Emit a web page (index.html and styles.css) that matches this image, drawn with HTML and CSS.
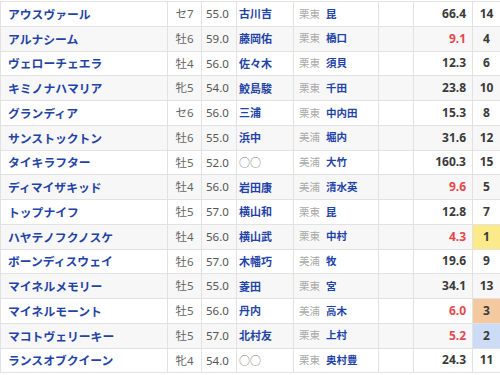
FILE: index.html
```html
<!DOCTYPE html>
<html lang="ja">
<head>
<meta charset="utf-8">
<link rel="stylesheet" href="styles.css">
</head>
<body>
<table class="shutuba">
<colgroup>
<col class="c-name"><col class="c-sex"><col class="c-wt"><col class="c-jk"><col class="c-tr"><col class="c-blank"><col class="c-odds"><col class="c-pop">
</colgroup>
<tbody>
<tr><td class="name">アウスヴァール</td><td class="sex">セ7</td><td class="wt">55.0</td><td class="jk">古川吉</td><td class="tr"><span class="area">栗東</span><span class="tn">昆</span></td><td></td><td class="odds">66.4</td><td class="pop">14</td></tr>
<tr><td class="name">アルナシーム</td><td class="sex">牡6</td><td class="wt">59.0</td><td class="jk">藤岡佑</td><td class="tr"><span class="area">栗東</span><span class="tn">橋口</span></td><td></td><td class="odds red">9.1</td><td class="pop">4</td></tr>
<tr><td class="name">ヴェローチェエラ</td><td class="sex">牡4</td><td class="wt">56.0</td><td class="jk">佐々木</td><td class="tr"><span class="area">栗東</span><span class="tn">須貝</span></td><td></td><td class="odds">12.3</td><td class="pop">6</td></tr>
<tr><td class="name">キミノナハマリア</td><td class="sex">牝5</td><td class="wt">54.0</td><td class="jk">鮫島駿</td><td class="tr"><span class="area">栗東</span><span class="tn">千田</span></td><td></td><td class="odds">23.8</td><td class="pop">10</td></tr>
<tr><td class="name">グランディア</td><td class="sex">セ6</td><td class="wt">56.0</td><td class="jk">三浦</td><td class="tr"><span class="area">栗東</span><span class="tn">中内田</span></td><td></td><td class="odds">15.3</td><td class="pop">8</td></tr>
<tr><td class="name">サンストックトン</td><td class="sex">牡6</td><td class="wt">55.0</td><td class="jk">浜中</td><td class="tr"><span class="area">美浦</span><span class="tn">堀内</span></td><td></td><td class="odds">31.6</td><td class="pop">12</td></tr>
<tr><td class="name">タイキラフター</td><td class="sex">牡5</td><td class="wt">52.0</td><td class="jk none">○○</td><td class="tr"><span class="area">美浦</span><span class="tn">大竹</span></td><td></td><td class="odds">160.3</td><td class="pop">15</td></tr>
<tr><td class="name">ディマイザキッド</td><td class="sex">牡4</td><td class="wt">56.0</td><td class="jk">岩田康</td><td class="tr"><span class="area">美浦</span><span class="tn">清水英</span></td><td></td><td class="odds red">9.6</td><td class="pop">5</td></tr>
<tr><td class="name">トップナイフ</td><td class="sex">牡5</td><td class="wt">57.0</td><td class="jk">横山和</td><td class="tr"><span class="area">栗東</span><span class="tn">昆</span></td><td></td><td class="odds">12.8</td><td class="pop">7</td></tr>
<tr><td class="name">ハヤテノフクノスケ</td><td class="sex">牡4</td><td class="wt">56.0</td><td class="jk">横山武</td><td class="tr"><span class="area">栗東</span><span class="tn">中村</span></td><td></td><td class="odds red">4.3</td><td class="pop first">1</td></tr>
<tr><td class="name">ボーンディスウェイ</td><td class="sex">牡6</td><td class="wt">57.0</td><td class="jk">木幡巧</td><td class="tr"><span class="area">美浦</span><span class="tn">牧</span></td><td></td><td class="odds">19.6</td><td class="pop">9</td></tr>
<tr><td class="name">マイネルメモリー</td><td class="sex">牡5</td><td class="wt">55.0</td><td class="jk">菱田</td><td class="tr"><span class="area">栗東</span><span class="tn">宮</span></td><td></td><td class="odds">34.1</td><td class="pop">13</td></tr>
<tr><td class="name">マイネルモーント</td><td class="sex">牡5</td><td class="wt">56.0</td><td class="jk">丹内</td><td class="tr"><span class="area">美浦</span><span class="tn">高木</span></td><td></td><td class="odds red">6.0</td><td class="pop third">3</td></tr>
<tr><td class="name">マコトヴェリーキー</td><td class="sex">牡5</td><td class="wt">57.0</td><td class="jk">北村友</td><td class="tr"><span class="area">栗東</span><span class="tn">上村</span></td><td></td><td class="odds red">5.2</td><td class="pop second">2</td></tr>
<tr><td class="name">ランスオブクイーン</td><td class="sex">牝4</td><td class="wt">54.0</td><td class="jk none">○○</td><td class="tr"><span class="area">栗東</span><span class="tn">奥村豊</span></td><td></td><td class="odds">24.3</td><td class="pop">11</td></tr>
</tbody>
</table>
</body>
</html>
```
FILE: styles.css
```css
html, body {
  margin: 0;
  padding: 0;
  overflow: hidden;
  background: #fff;
}
body {
  font-family: "Noto Sans", "Noto Sans CJK JP", sans-serif;
  color: #555;
}
.shutuba {
  margin-top: 1px;
  border-collapse: collapse;
  table-layout: fixed;
  width: 504px;
}
.c-name { width: 167px; }
.c-sex { width: 34px; }
.c-wt { width: 35px; }
.c-jk { width: 57px; }
.c-tr { width: 85px; }
.c-blank { width: 35px; }
.c-odds { width: 59px; }
.c-pop { width: 32px; }
.shutuba tr {
  height: 24.75px;
}
.shutuba tr:nth-child(even) {
  background: #f7f7f7;
}
.shutuba td {
  border: 1px solid #e2e2e2;
  padding: 0;
  white-space: nowrap;
  overflow: hidden;
  vertical-align: middle;
  line-height: 1;
  height: 23.75px;
  box-sizing: border-box;
}
.name {
  padding-left: 7px !important;
  font-family: "Noto Sans CJK JP", sans-serif;
  font-weight: bold;
  font-size: 11.8px;
  color: #1f43a6;
}
.sex {
  text-align: center;
  font-size: 11.5px;
  color: #666;
}
.wt {
  padding-left: 4px !important;
  font-size: 11.5px;
  color: #555;
}
.jk {
  padding-left: 2px !important;
  font-family: "Noto Sans CJK JP", sans-serif;
  font-weight: bold;
  font-size: 11px;
  color: #1f43a6;
}
.jk.none {
  font-weight: normal;
  color: #777;
}
.tr {
  padding-left: 5px !important;
  font-family: "Noto Sans CJK JP", sans-serif;
  font-size: 10.5px;
}
.area {
  color: #aaa;
  margin-right: 6px;
}
.tn {
  font-weight: bold;
  color: #1f43a6;
}
.odds {
  text-align: right;
  padding-right: 6px !important;
  font-weight: bold;
  font-size: 12px;
  color: #3a3a3a;
}
.odds.red {
  color: #e5484d;
}
.pop {
  text-align: center;
  font-weight: bold;
  font-size: 12px;
  color: #3a3a3a;
  padding-right: 4px !important;
}
.pop.first { background: #fbe98a; }
.pop.second { background: #cddcf6; }
.pop.third { background: #f4c9a0; }
```
